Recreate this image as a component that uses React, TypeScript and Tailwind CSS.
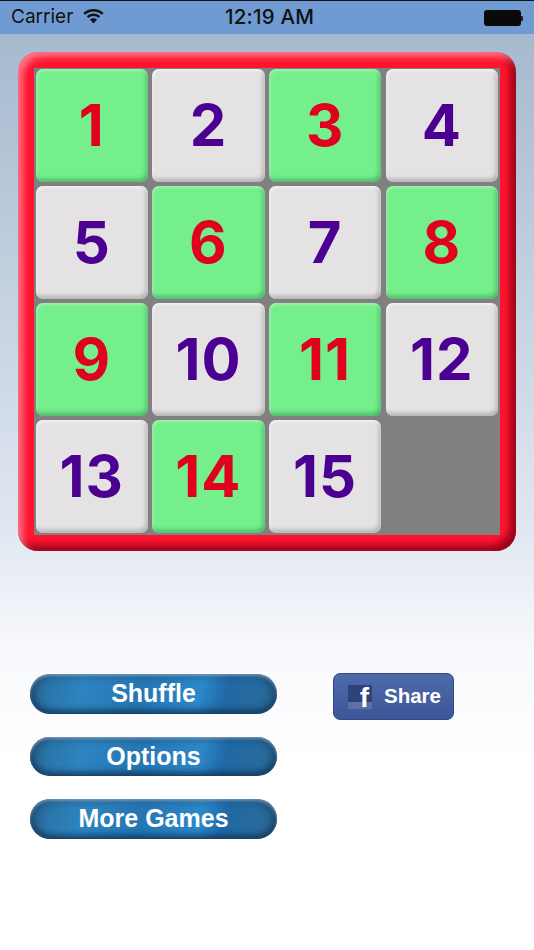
const tiles = [1, 2, 3, 4, 5, 6, 7, 8, 9, 10, 11, 12, 13, 14, 15];

function Tile({ n }: { n: number }) {
  // green and white tiles alternate like a checkerboard
  const row = Math.floor((n - 1) / 4);
  const col = (n - 1) % 4;
  const green = (row + col) % 2 === 0;
  return (
    <div
      className={`h-[113px] rounded-[7px] flex items-center justify-center font-['Inter',sans-serif] font-bold text-[58px] leading-none tracking-[1px] pb-[1px] ${
        green
          ? "bg-[#74ef8b] text-[#e2001f] shadow-[inset_0_2px_3px_rgba(255,255,255,0.3),inset_-2px_-3px_4px_rgba(0,90,40,0.35),inset_2px_0_3px_rgba(255,255,255,0.2)]"
          : "bg-[#e4e2e3] text-[#4b0092] shadow-[inset_0_2px_3px_rgba(255,255,255,0.5),inset_-2px_-3px_4px_rgba(0,0,0,0.22),inset_2px_0_3px_rgba(255,255,255,0.4)]"
      }`}
    >
      {n}
    </div>
  );
}

function Board() {
  return (
    <div className="w-[498px] h-[499px] rounded-[20px] p-[16px] bg-[#ff1430] shadow-[inset_5px_5px_6px_rgba(255,255,255,0.4),inset_-6px_-6px_7px_rgba(120,0,15,0.75)]">
      <div className="w-[466px] h-[467px] bg-[#808080] pt-[1px] pl-[1.5px]">
        <div className="grid grid-cols-[112.5px_112.5px_112.5px_112.5px] gap-x-[4.2px] gap-y-[4px]">
          {tiles.map((n) => (
            <Tile key={n} n={n} />
          ))}
        </div>
      </div>
    </div>
  );
}

function PillButton({ label }: { label: string }) {
  return (
    <button className="w-[247px] h-[39.5px] rounded-[20px] text-white font-bold text-[25px] leading-none pt-[1px] border-b border-[#1d3f5e] bg-[linear-gradient(105deg,#2a6a97_0%,#2d84c0_22%,#2576b3_45%,#2c88c8_68%,#2069a6_78%,#2c6c96_100%)] shadow-[inset_0_2px_3px_rgba(200,210,220,0.5),inset_0_-3px_5px_rgba(10,40,80,0.4),inset_6px_0_8px_rgba(15,40,70,0.4),inset_-6px_0_8px_rgba(15,40,70,0.4)]">
      {label}
    </button>
  );
}

function ShareButton() {
  return (
    <button className="w-[121px] h-[47px] rounded-[7px] flex items-center pl-[14px] border border-[#34487f] bg-[linear-gradient(180deg,#4f6aab_0%,#3d5699_100%)]">
      <span className="relative w-[24px] h-[24px] rounded-[1px] bg-[linear-gradient(180deg,#2d4379_0%,#2d4379_72%,#5b70a5_72%,#5b70a5_100%)]">
        <span className="absolute right-[3px] bottom-[-2px] text-white font-bold text-[28px] leading-[26px]">f</span>
      </span>
      <span className="ml-[12px] text-white font-bold text-[20.5px] leading-none">Share</span>
    </button>
  );
}

function StatusBar() {
  return (
    <div className="relative h-[34px] bg-[#709bd2] border-t-[1px] border-[#111] flex items-center text-[#111] text-[19px] font-['Inter',sans-serif] px-[11px]">
      <span>Carrier</span>
      <svg className="ml-[10px] mb-[2px]" width="21" height="15" viewBox="0 0 21 15" fill="#111">
        <path d="M10.500 0C6.600 0 3.100 1.500.4 4l1.600 1.800C4.200 3.700 7.200 2.400 10.500 2.400s6.300 1.300 8.500 3.400L20.600 4C17.900 1.500 14.400 0 10.500 0z" />
        <path d="M10.500 4.600c-2.500 0-4.900 1-6.700 2.600l1.600 1.800c1.400-1.200 3.200-2 5.100-2s3.700.8 5.100 2l1.600-1.800c-1.800-1.600-4.200-2.600-6.700-2.600z" />
        <path d="M10.500 9.200c-1.400 0-2.600.5-3.600 1.400l3.600 4 3.600-4c-1-.9-2.200-1.400-3.600-1.400z" />
      </svg>
      <span className="absolute left-[225px] font-medium text-[20.5px] tracking-[0.2px]">12:19 AM</span>
      <div className="absolute left-[484px] top-[9px] flex items-center">
        <div className="w-[37px] h-[16px] rounded-[3px] bg-[#0a0a0a]" />
        <div className="w-[2px] h-[5px] rounded-r-[1px] bg-[#222]" />
      </div>
    </div>
  );
}

export default function App() {
  return (
    <div className="font-['Liberation_Sans',Arial,sans-serif] w-[534px] h-[950px] overflow-hidden flex flex-col bg-[linear-gradient(180deg,#a3b7cd_0px,#a3b7cd_10px,#dfe6f0_520px,#f8f9fc_650px,#ffffff_760px)]">
      <StatusBar />
      <div className="pl-[18px] pt-[18px]">
        <Board />
      </div>
      <div className="flex pl-[30px] pt-[122px]">
        <div className="flex flex-col gap-[23px] mt-[1px]">
          <PillButton label="Shuffle" />
          <PillButton label="Options" />
          <PillButton label="More Games" />
        </div>
        <div className="ml-[56px]">
          <ShareButton />
        </div>
      </div>
    </div>
  );
}
